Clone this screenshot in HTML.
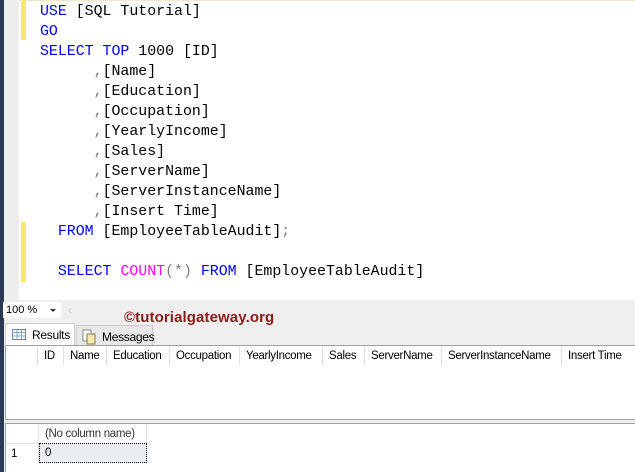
<!DOCTYPE html><html><head><style>
*{margin:0;padding:0;box-sizing:border-box}
body{width:635px;height:472px;overflow:hidden;background:#efefef;position:relative;font-family:"Liberation Sans",sans-serif}
.strip{position:absolute;left:0;top:0;width:4px;height:472px;background:#293955}
.gut{position:absolute;left:4px;top:0;width:15px;height:300px;background:#eeeeee}
.ed{position:absolute;left:19px;top:0;width:616px;height:300px;background:#fff;border-top:1px solid #f3e7c9}
.yb{position:absolute;left:21px;width:5px;background:#f7ea6e}
.code{position:absolute;left:40px;top:2px;font-family:"Liberation Mono",monospace;font-size:14.9px;line-height:20px;white-space:pre;color:#000}
.k{color:#0000ff}.f{color:#ff00ff}.g{color:#808080}
.zoom{position:absolute;left:3px;top:302px;width:58px;height:16px;background:#fff;font-size:11px;line-height:16px;padding-left:3px}
.zoom:after{content:"";position:absolute;right:5px;top:7px;border-left:3px solid transparent;border-right:3px solid transparent;border-top:3px solid #333}
.wm{position:absolute;left:124px;top:309px;font-family:"Liberation Sans",sans-serif;font-weight:bold;font-size:15px;color:#8b1a1a;letter-spacing:.1px}
.tab{position:absolute;top:323px;height:22px;font-size:12px;line-height:22px;white-space:nowrap;letter-spacing:-.3px}
.g1{position:absolute;left:5px;top:345px;width:640px;height:75px;background:#fff;border:1px solid #a0a0a0}
.g2{position:absolute;left:5px;top:423px;width:640px;height:49px;background:#fff;border-top:1px solid #a0a0a0;border-left:1px solid #a0a0a0}
.h{position:absolute;top:0;height:20px;font-size:11.5px;line-height:20px;padding-left:6px;border-right:1px solid #e0e0e0;letter-spacing:-.3px;white-space:nowrap}
</style></head><body>
<div class="strip"></div><div class="gut"></div><div class="ed"></div>
<div class="yb" style="top:0;height:40px"></div>
<div class="yb" style="top:222px;height:60px"></div>
<div class="code"><span class="k">USE</span> [SQL Tutorial]
<span class="k">GO</span>
<span class="k">SELECT TOP</span> 1000 [ID]
      <span class="g">,</span>[Name]
      <span class="g">,</span>[Education]
      <span class="g">,</span>[Occupation]
      <span class="g">,</span>[YearlyIncome]
      <span class="g">,</span>[Sales]
      <span class="g">,</span>[ServerName]
      <span class="g">,</span>[ServerInstanceName]
      <span class="g">,</span>[Insert Time]
  <span class="k">FROM</span> [EmployeeTableAudit]<span class="g">;</span>

  <span class="k">SELECT</span> <span class="f">COUNT</span><span class="g">(*)</span> <span class="k">FROM</span> [EmployeeTableAudit]</div>
<div class="zoom">100 %</div>
<div style="position:absolute;left:68px;top:303px;color:#c8c8c8;font-size:12px">‹</div>
<div class="wm">©tutorialgateway.org</div>
<div class="tab" style="left:76px;width:77px;background:#e8e8e8;border:1px solid #ccc;border-bottom:none;padding-left:25px;top:325px">Messages
<svg style="position:absolute;left:5px;top:3px" width="14" height="16"><rect x="1" y="1" width="8" height="11" fill="#fff" stroke="#888"/><rect x="5" y="5" width="8" height="10" fill="#f3e8b0" stroke="#8a7a40"/></svg></div>
<div class="tab" style="left:5px;width:70px;background:#fff;border:1px solid #ccc;border-bottom:none;padding-left:26px">Results
<svg style="position:absolute;left:6px;top:5px" width="14" height="11"><rect x=".5" y=".5" width="13" height="10" fill="#fff" stroke="#6a87a8"/><path d="M.5 3.5h13M.5 7h13M5 .5v10M9.5 .5v10" stroke="#8aa4c2"/></svg></div>
<div class="g1">
<div class="h" style="left:0;width:32px"></div>
<div class="h" style="left:32px;width:26px">ID</div>
<div class="h" style="left:58px;width:43px">Name</div>
<div class="h" style="left:101px;width:63px">Education</div>
<div class="h" style="left:164px;width:70px">Occupation</div>
<div class="h" style="left:234px;width:83px">YearlyIncome</div>
<div class="h" style="left:317px;width:42px">Sales</div>
<div class="h" style="left:359px;width:77px">ServerName</div>
<div class="h" style="left:436px;width:120px">ServerInstanceName</div>
<div class="h" style="left:556px;width:80px">Insert Time</div>
</div>
<div class="g2">
<div class="h" style="left:0;width:33px"></div>
<div class="h" style="left:33px;width:108px;color:#333">(No column name)</div>
<div style="position:absolute;left:0;top:19px;width:33px;height:20px;border-top:1px solid #e0e0e0;border-right:1px solid #e0e0e0;font-size:11.5px;line-height:20px;padding-left:5px">1</div>
<div style="position:absolute;left:33px;top:19px;width:108px;height:20px;background:#e9edf1;border:1px dotted #000;font-size:11.5px;line-height:18px;padding-left:5px">0</div>
</div>
</body></html>
